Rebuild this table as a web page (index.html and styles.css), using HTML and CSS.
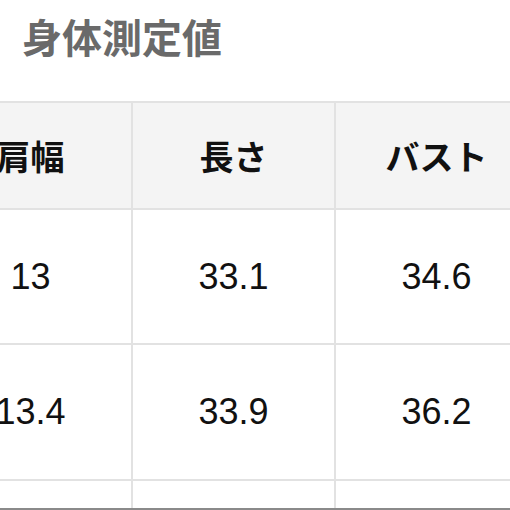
FILE: index.html
```html
<!DOCTYPE html>
<html lang="ja">
<head>
<meta charset="utf-8">
<link rel="stylesheet" href="styles.css">
</head>
<body>
<div class="page">
  <h2 class="title">身体測定値</h2>
  <div class="sheet">
    <div class="cell head">肩幅</div>
    <div class="cell head">長さ</div>
    <div class="cell head">バスト</div>
    <div class="cell">13</div>
    <div class="cell">33.1</div>
    <div class="cell">34.6</div>
    <div class="cell">13.4</div>
    <div class="cell">33.9</div>
    <div class="cell">36.2</div>
    <div class="cell"></div>
    <div class="cell"></div>
    <div class="cell"></div>
  </div>
  <div class="edge"></div>
</div>
</body>
</html>
```
FILE: styles.css
```css
html, body {
  margin: 0;
  padding: 0;
  background: #ffffff;
}
body {
  width: 510px;
  height: 510px;
  overflow: hidden;
  font-family: "Liberation Sans", "Noto Sans CJK JP", sans-serif;
}
.page {
  width: 510px;
  height: 510px;
  overflow: hidden;
}
.title {
  margin: 0;
  height: 101px;
  box-sizing: border-box;
  padding: 16px 0 0 22px;
  font-family: "Noto Sans CJK JP", sans-serif;
  font-size: 40px;
  line-height: 40px;
  font-weight: 700;
  color: #6a6a6a;
}
.sheet {
  display: grid;
  grid-template-columns: repeat(3, 201px);
  grid-template-rows: 105px 133px 134px 27px;
  gap: 2px;
  padding-top: 2px;
  margin-left: -70px;
  width: 607px;
  background: #e2e2e2;
}
.cell {
  background: #ffffff;
  display: flex;
  align-items: center;
  justify-content: center;
  font-size: 36px;
  color: #111111;
}
.head {
  background: #f4f4f4;
  font-family: "Noto Sans CJK JP", sans-serif;
  font-weight: 700;
  font-size: 34px;
}
.edge {
  height: 2px;
  background: #8a8a8a;
}
```
